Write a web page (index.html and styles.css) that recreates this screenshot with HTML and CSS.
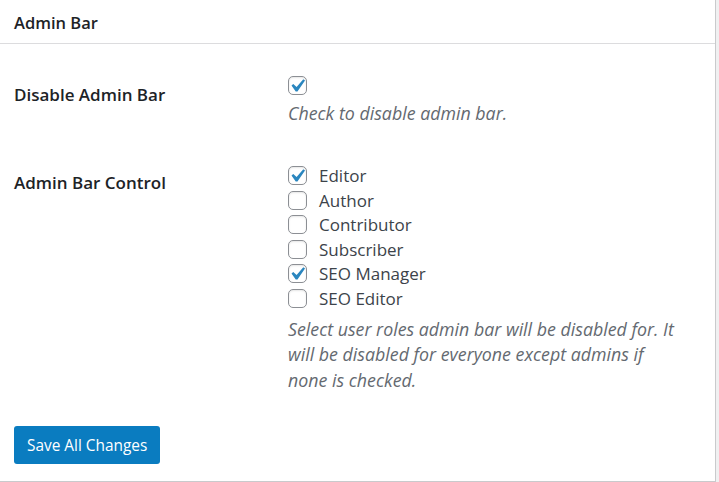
FILE: index.html
```html
<!DOCTYPE html>
<html lang="en">
<head>
    <meta charset="UTF-8">
    <meta name="viewport" content="width=device-width, initial-scale=1.0">
    <title>Admin Bar</title>
    <link rel="stylesheet" href="styles.css">
</head>
<body>
    <div class="panel">
        <h2 class="panel-title">Admin Bar</h2>

        <div class="form-row first">
            <div class="form-label">Disable Admin Bar</div>
            <div class="form-field">
                <label class="option single">
                    <span class="box checked"><svg viewBox="0 0 20 20"><path d="M14.83 4.89l1.34.94-5.81 8.38H9.02L5.78 9.67l1.34-1.25 2.57 2.4z"/></svg></span>
                </label>
                <p class="description">Check to disable admin bar.</p>
            </div>
        </div>

        <div class="form-row">
            <div class="form-label">Admin Bar Control</div>
            <div class="form-field">
                <label class="option"><span class="box checked"><svg viewBox="0 0 20 20"><path d="M14.83 4.89l1.34.94-5.81 8.38H9.02L5.78 9.67l1.34-1.25 2.57 2.4z"/></svg></span>Editor</label>
                <label class="option"><span class="box"></span>Author</label>
                <label class="option"><span class="box"></span>Contributor</label>
                <label class="option"><span class="box"></span>Subscriber</label>
                <label class="option"><span class="box checked"><svg viewBox="0 0 20 20"><path d="M14.83 4.89l1.34.94-5.81 8.38H9.02L5.78 9.67l1.34-1.25 2.57 2.4z"/></svg></span>SEO Manager</label>
                <label class="option"><span class="box"></span>SEO Editor</label>
                <p class="description">Select user roles admin bar will be disabled for. It will be disabled for everyone except admins if<br>none is checked.</p>
            </div>
        </div>

        <div class="buttons">
            <button class="save-button">Save All Changes</button>
        </div>
    </div>
</body>
</html>
```

FILE: styles.css
```css
body {
    margin: 0;
    padding: 0;
    background: #f0f0f1;
    font-family: 'Open Sans', 'Noto Sans', sans-serif;
    color: #1d2327;
}
.panel {
    width: 715px;
    height: 481px;
    background: #fff;
    border-right: 1px solid #c9cacc;
    border-bottom: 1px solid #c9cacc;
}
.panel-title {
    margin: 0;
    height: 44px;
    padding: 1px 14px 0;
    box-sizing: border-box;
    display: flex;
    align-items: center;
    font-size: 16.5px;
    font-weight: 600;
    color: #1d2327;
    border-bottom: 1px solid #dcdcde;
}
.form-row {
    display: grid;
    grid-template-columns: 274px 400px;
    padding-left: 14px;
    margin-top: 37px;
}
.form-row.first {
    margin-top: 32px;
}
.form-label {
    font-size: 17px;
    font-weight: 600;
    line-height: 24px;
    padding-top: 7px;
}
.option {
    display: flex;
    align-items: center;
    height: 24.5px;
    font-size: 17px;
    color: #3c434a;
    cursor: pointer;
}
.option.single {
    height: 19px;
}
.box {
    width: 19px;
    height: 19px;
    box-sizing: border-box;
    border: 1px solid #8c8f94;
    border-radius: 5px;
    background: #fff;
    box-shadow: inset 0 1px 2px rgba(0, 0, 0, 0.1);
    margin-right: 12px;
    display: flex;
    align-items: center;
    justify-content: center;
    flex-shrink: 0;
}
.box svg {
    width: 26px;
    height: 26px;
    flex-shrink: 0;
    fill: #2a86bf;
    margin-top: 1px;
    margin-left: -1px;
}
.description {
    margin: 6px 0 0;
    font-size: 17.8px;
    font-style: italic;
    line-height: 25.5px;
    color: #646970;
}
.buttons {
    padding-left: 14px;
    margin-top: 33px;
}
.save-button {
    height: 38px;
    padding: 0 13px;
    background: #0a7cc0;
    color: #fff;
    border: none;
    border-radius: 3px;
    font-family: inherit;
    font-size: 15.4px;
    cursor: pointer;
}
```
